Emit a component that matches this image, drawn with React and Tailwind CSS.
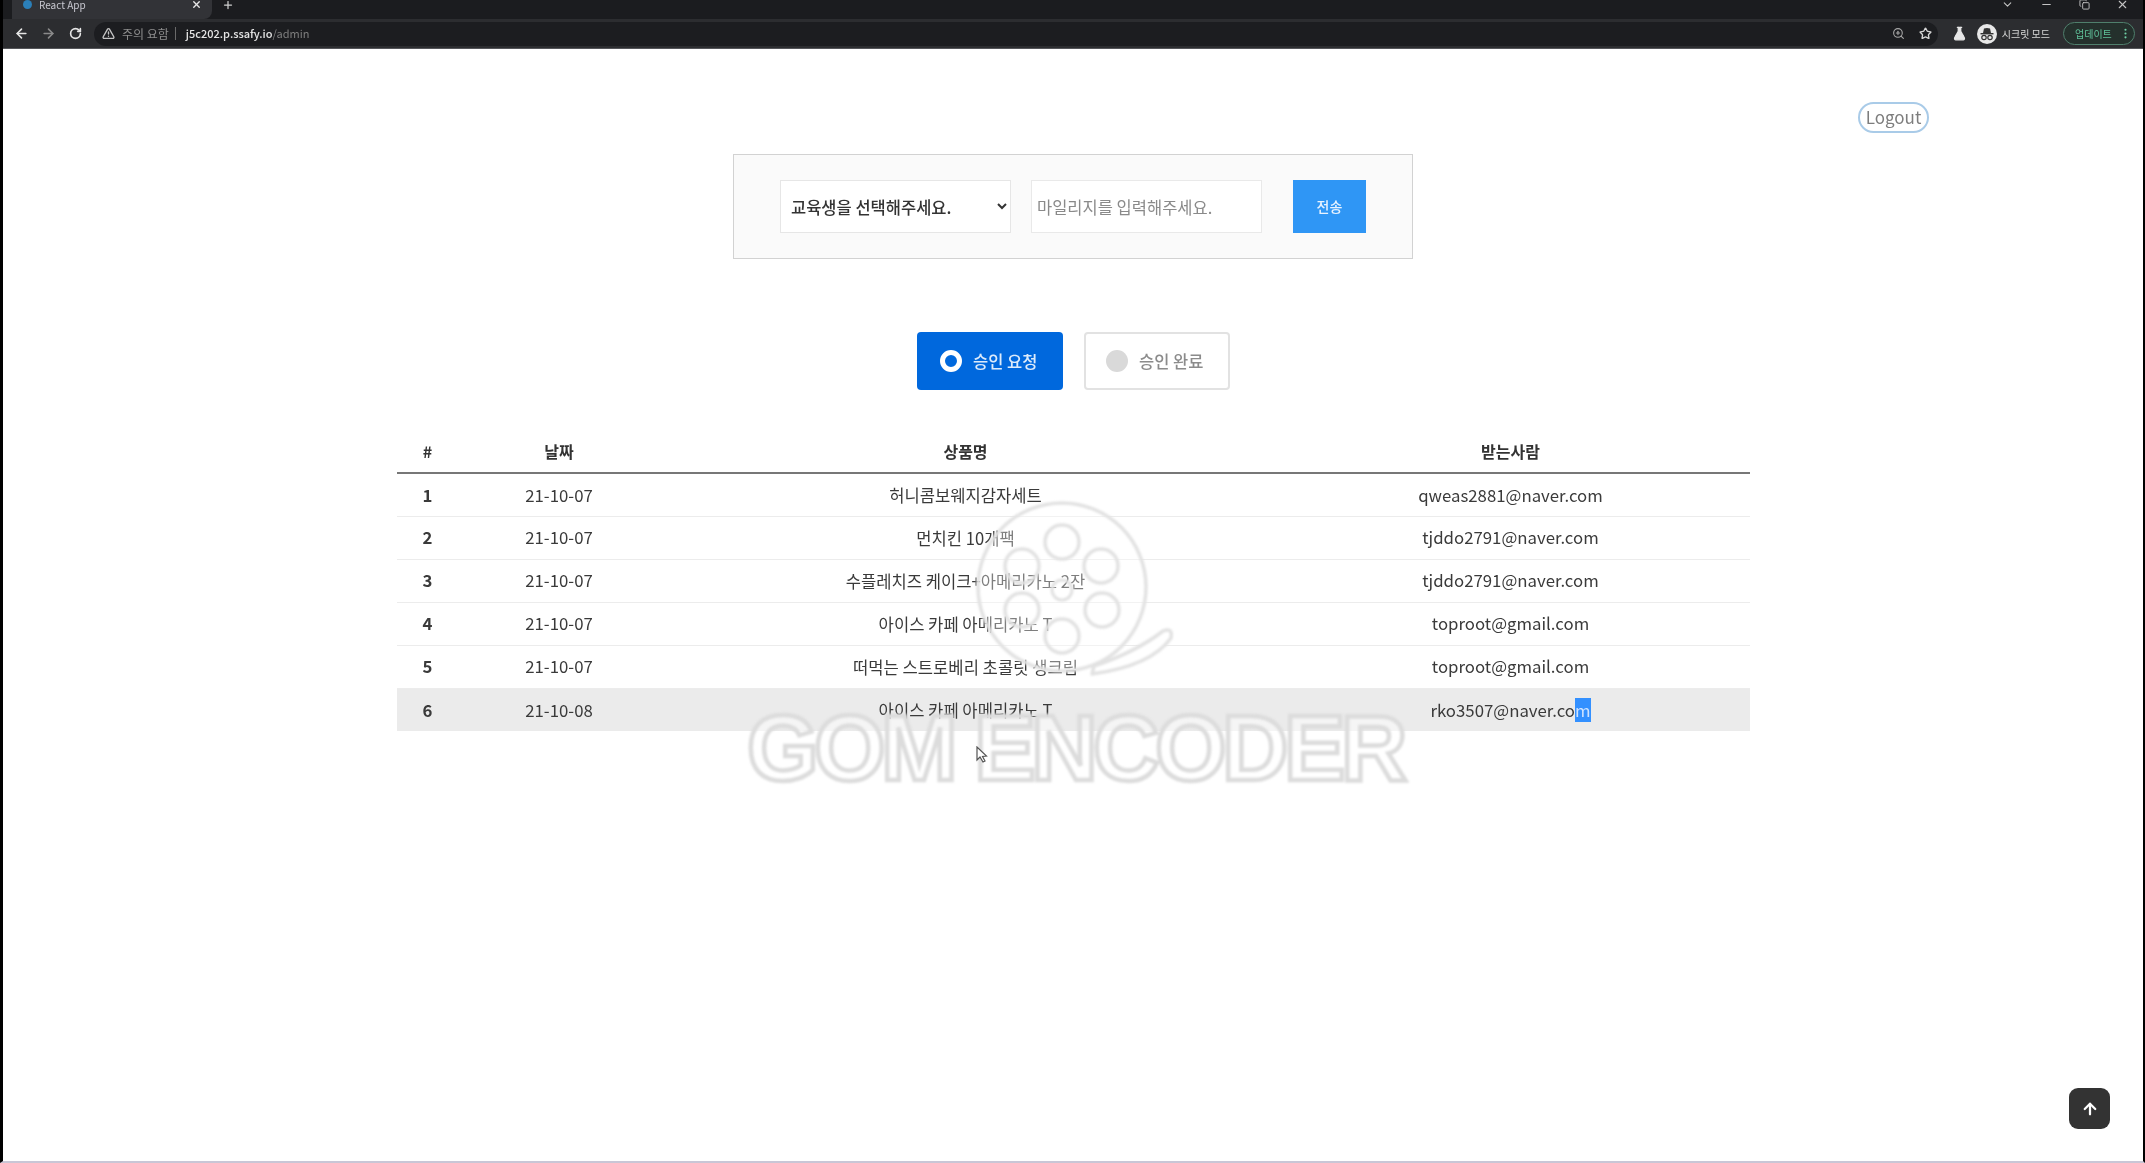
import React from 'react';
import {
  ArrowLeft,
  ArrowRight,
  ArrowUp,
  ChevronDown,
  Copy,
  FlaskConical,
  Minus,
  MoreVertical,
  Plus,
  RotateCw,
  Star,
  TriangleAlert,
  X,
  ZoomIn,
} from 'lucide-react';

const rows = [
  { id: 1, date: '21-10-07', name: '허니콤보웨지감자세트', to: 'qweas2881@naver.com' },
  { id: 2, date: '21-10-07', name: '먼치킨 10개팩', to: 'tjddo2791@naver.com' },
  { id: 3, date: '21-10-07', name: '수플레치즈 케이크+아메리카노 2잔', to: 'tjddo2791@naver.com' },
  { id: 4, date: '21-10-07', name: '아이스 카페 아메리카노 T', to: 'toproot@gmail.com' },
  { id: 5, date: '21-10-07', name: '떠먹는 스트로베리 초콜릿 생크림', to: 'toproot@gmail.com' },
  { id: 6, date: '21-10-08', name: '아이스 카페 아메리카노 T', to: 'rko3507@naver.co', hl: true },
];

const reelHoles = [
  [94, 42],
  [133, 66],
  [134, 110],
  [94, 136],
  [54, 110],
  [54, 66],
];

function IncognitoIcon() {
  return (
    <svg width="20" height="20" viewBox="0 0 20 20" className="ml-[10px] shrink-0">
      <circle cx="10" cy="10" r="10" fill="#e8e8e8" />
      <path d="M6 9 L7 4.5 Q10 3.5 13 4.5 L14 9 Z" fill="#333" />
      <rect x="3.5" y="9" width="13" height="1.4" fill="#333" />
      <circle cx="7" cy="13.5" r="2.2" fill="none" stroke="#333" strokeWidth="1.2" />
      <circle cx="13" cy="13.5" r="2.2" fill="none" stroke="#333" strokeWidth="1.2" />
    </svg>
  );
}

function BrowserBar() {
  return (
    <div className="shrink-0 text-[#dcdcdc]">
      {/* tab strip, cut off at the top by the recording */}
      <div className="flex h-[19px] items-start overflow-hidden bg-[#1b1c1f]">
        <div className="ml-[9px] flex h-[19px] w-[200px] rounded-br-lg bg-[#323337] pl-[11px] pr-[10px]">
          <div className="flex h-[9px] w-full items-center">
            <span className="h-[9px] w-[9px] rounded-full bg-[#2b7fb8]" />
            <span className="ml-[7px] text-[10px] text-[#c8c8d0]">React App</span>
            <X size={11} strokeWidth={3} className="ml-auto text-[#e8e8e8]" />
          </div>
        </div>
        <div className="ml-[10px] flex h-[9px] items-center">
          <Plus size={12} strokeWidth={2.5} className="text-[#cfcfcf]" />
        </div>
        <div className="ml-auto flex h-[9px] items-center gap-[26px] pr-[14px] text-[#c4c4c4]">
          <ChevronDown size={13} />
          <Minus size={13} />
          <Copy size={11} />
          <X size={13} />
        </div>
      </div>

      {/* toolbar */}
      <div className="flex h-[30px] items-center border-b border-[#55565a] bg-[#2c2d30] pl-[11px] pr-[8px]">
        <ArrowLeft size={15} strokeWidth={2.5} className="text-[#e6e6e6]" />
        <ArrowRight size={15} strokeWidth={2.5} className="ml-[12px] text-[#8a8a8a]" />
        <RotateCw size={13} strokeWidth={3} className="ml-[13px] text-[#e6e6e6]" />
        <div className="ml-[12px] flex h-[24px] flex-1 items-center rounded-full bg-[#1c1d20] pl-[8px] pr-[6px]">
          <TriangleAlert size={13} strokeWidth={2.5} className="text-[#c4c4c4]" />
          <span className="ml-[7px] text-[12px] text-[#8e8e8e]">주의 요함</span>
          <span className="mx-[6px] h-[13px] w-px bg-[#6a6a6a]" />
          <span className="ml-[4px] text-[11px] font-medium text-[#e6e6e6]">
            j5c202.p.ssafy.io<span className="font-normal text-[#7f7f7f]">/admin</span>
          </span>
          <ZoomIn size={13} className="ml-auto text-[#a8a8a8]" />
          <Star size={13} strokeWidth={2.5} className="ml-[14px] text-[#d6d6d6]" />
        </div>
        <FlaskConical size={15} fill="#e6e6e6" className="ml-[14px] text-[#e6e6e6]" />
        <IncognitoIcon />
        <span className="ml-[5px] text-[10px] text-[#d8d8d8]">시크릿 모드</span>
        <div className="ml-[13px] flex h-[23px] w-[72px] items-center rounded-full border border-[#4f7f6c] bg-[#24302c] pl-[11px] pr-[2px]">
          <span className="text-[10px] text-[#5fc29a]">업데이트</span>
          <MoreVertical size={13} className="ml-auto text-[#6fcfa5]" />
        </div>
      </div>
    </div>
  );
}

function AdminForm() {
  return (
    <form className="flex h-[105px] w-[680px] items-center border border-[#d2d2d2] bg-[#fafafa] pl-[46px]">
      <select className="h-[53px] w-[231px] border border-[#e6e6e6] bg-white pl-[6px] pr-[1px] text-[16.5px] font-medium text-[#333]">
        <option>교육생을 선택해주세요.</option>
      </select>
      <input
        placeholder="마일리지를 입력해주세요."
        className="ml-[20px] h-[53px] w-[231px] border border-[#e9e9e9] bg-white pl-[5px] text-[16.5px] outline-none placeholder:text-[#8a8a8a]"
      />
      <button type="button" className="ml-[31px] h-[53px] w-[73px] bg-[#2f96f5] text-[14px] font-medium text-[#e8f3ff]">
        전송
      </button>
    </form>
  );
}

function StatusTabs() {
  return (
    <div className="mt-[73px] flex justify-center gap-[21px] pl-[1px]">
      <button className="flex h-[58px] w-[146px] items-center rounded-[4px] bg-[#0068dd] pl-[23px] text-[16.5px] font-medium text-[#dcebfb]">
        <span className="h-[22px] w-[22px] rounded-full border-[5px] border-white" />
        <span className="ml-[11px]">승인 요청</span>
      </button>
      <button className="flex h-[58px] w-[146px] items-center rounded-[4px] border-2 border-[#e2e2e2] bg-white pl-[20px] text-[16.5px] font-medium text-[#8b8b8b]">
        <span className="h-[22px] w-[22px] rounded-full bg-[#d9d9d9]" />
        <span className="ml-[11px]">승인 완료</span>
      </button>
    </div>
  );
}

function OrderTable() {
  return (
    <table className="mx-auto mt-[40px] w-[1353px] table-fixed border-collapse text-center text-[16.8px] text-[#3a3a3a]">
      <colgroup>
        <col className="w-[62px]" />
        <col className="w-[201px]" />
        <col className="w-[612px]" />
        <col className="w-[478px]" />
      </colgroup>
      <thead>
        <tr className="h-[43px] border-b-2 border-[#777] text-[16px] font-bold text-[#333]">
          <th>#</th>
          <th>날짜</th>
          <th>상품명</th>
          <th>받는사람</th>
        </tr>
      </thead>
      <tbody>
        {rows.map((r) => (
          <tr key={r.id} className={r.hl ? 'h-[43px] bg-[#ebebeb]' : 'h-[43px] border-b border-[#ececec]'}>
            <td className="pt-[1px] font-bold">{r.id}</td>
            <td className="pt-[1px]">{r.date}</td>
            <td className="pt-[1px] text-[16.6px]">{r.name}</td>
            <td className="pt-[1px]">
              {r.to}
              {r.hl && <span className="bg-[#3390ff] text-[#cfe3ff]">m</span>}
            </td>
          </tr>
        ))}
      </tbody>
    </table>
  );
}

// gom encoder watermark burnt into the recording
function Watermark() {
  return (
    <div className="pointer-events-none absolute left-[744px] top-[500px] h-[290px] w-[670px] blur-[1px]">
      <svg width="240" height="190" viewBox="0 0 240 190" className="absolute left-[221px] top-0" fill="none">
        <circle cx="94" cy="87" r="84" fill="#ffffff" fillOpacity="0.35" stroke="#e2e2e2" strokeWidth="3.5" />
        <path
          d="M126 166 Q168 152 195 131 Q205 127 203 138 Q183 166 124 174 Z"
          fill="#ffffff"
          stroke="#e2e2e2"
          strokeWidth="3.5"
          strokeLinejoin="round"
        />
        {reelHoles.map(([cx, cy]) => (
          <circle key={cx + '-' + cy} cx={cx} cy={cy} r="17" stroke="#e2e2e2" strokeWidth="3.5" />
        ))}
        <circle cx="94" cy="90" r="10" stroke="#e2e2e2" strokeWidth="3" />
      </svg>
      <div className="absolute left-0 top-[202px] whitespace-nowrap font-['Liberation_Sans',sans-serif] text-[92px] font-bold leading-none tracking-[-4.5px] text-[#ffffff80] [-webkit-text-stroke:4.5px_#dcdcdc]">
        GOM ENCODER
      </div>
    </div>
  );
}

export default function App() {
  return (
    <div className="relative flex h-[1163px] w-full flex-col overflow-hidden border-r-2 border-l-[3px] border-b-2 border-r-black border-l-black border-b-[#c9c6d6] bg-white font-['Noto_Sans_CJK_KR','Noto_Sans',sans-serif] blur-[0.4px]">
      <BrowserBar />
      <main className="flex-1">
        <div className="flex justify-end pr-[214px] pt-[53px]">
          <button className="h-[31px] w-[71px] rounded-full border-2 border-[#a9cbe8] pb-[3px] text-[17px] leading-none text-[#7d7d7d]">
            Logout
          </button>
        </div>
        <div className="mt-[21px] flex justify-center">
          <AdminForm />
        </div>
        <StatusTabs />
        <OrderTable />
      </main>

      <Watermark />

      {/* mouse pointer */}
      <svg width="12" height="18" viewBox="0 0 12 18" className="absolute left-[973px] top-[746px]">
        <path d="M1 1 L1 14 L4 11 L7 16 L9 15 L6.5 10.5 L10.5 10 Z" fill="#fff" stroke="#555" strokeWidth="1.2" />
      </svg>

      <button className="absolute right-[33px] top-[1088px] flex h-[41px] w-[41px] items-center justify-center rounded-[9px] bg-[#333] text-white">
        <ArrowUp size={18} strokeWidth={3} />
      </button>
    </div>
  );
}
